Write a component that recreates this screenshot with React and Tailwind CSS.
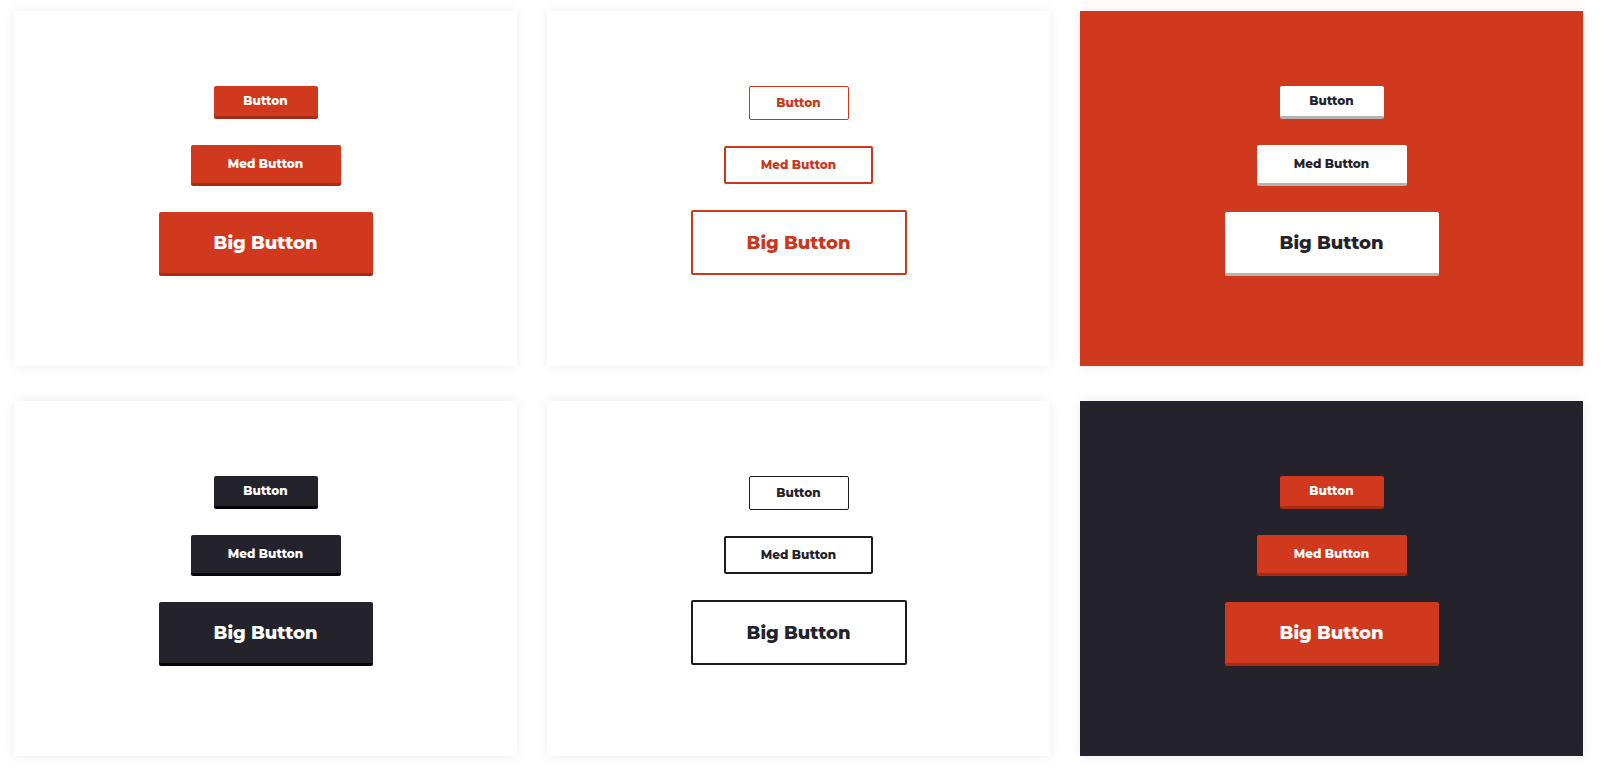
import React from 'react';

const font = { fontFamily: 'Montserrat, Inter, "Open Sans", sans-serif' };

// solid buttons have a darker 3px bottom edge
const solidSize = {
  sm: 'w-[104px] h-[33px] text-[12px]',
  md: 'w-[150px] h-[41px] text-[12px]',
  lg: 'w-[214px] h-[64px] text-[18px] pt-[2px]',
};

const outlineSize = {
  sm: 'w-[100px] h-[34px] text-[12px] border',
  md: 'w-[149px] h-[38px] text-[12px] border-2',
  lg: 'w-[216px] h-[65px] text-[18px] border-2 pt-[2px]',
};

const solidTheme = {
  red: 'bg-[#d0391d] text-white border-b-[#a72c16]',
  dark: 'bg-[#24232b] text-white border-b-[#050507]',
  white: 'bg-white text-[#24232b] border-b-[#b3b3b3]',
};

const outlineTheme = {
  red: 'border-[#c9381c] text-[#c9381c] bg-white',
  dark: 'border-[#1c1b22] text-[#24232b] bg-white',
};

const SolidButton = ({ size, theme, children }) => (
  <button
    className={`${solidSize[size]} ${solidTheme[theme]} border-b-[3px] rounded-[2px] font-extrabold flex items-center justify-center`}
  >
    {children}
  </button>
);

const OutlineButton = ({ size, theme, children }) => (
  <button
    className={`${outlineSize[size]} ${outlineTheme[theme]} rounded-[2px] font-extrabold flex items-center justify-center`}
  >
    {children}
  </button>
);

const Panel = ({ bg, children }) => (
  <div className={`${bg} h-[355px] flex flex-col items-center pt-[75px] gap-[26px] shadow-[0_0_12px_rgba(0,0,0,0.08)]`}>
    {children}
  </div>
);

const SolidSet = ({ theme }) => (
  <>
    <SolidButton size="sm" theme={theme}>Button</SolidButton>
    <SolidButton size="md" theme={theme}>Med Button</SolidButton>
    <SolidButton size="lg" theme={theme}>Big Button</SolidButton>
  </>
);

const OutlineSet = ({ theme }) => (
  <>
    <OutlineButton size="sm" theme={theme}>Button</OutlineButton>
    <OutlineButton size="md" theme={theme}>Med Button</OutlineButton>
    <OutlineButton size="lg" theme={theme}>Big Button</OutlineButton>
  </>
);

const App = () => {
  return (
    <div className="min-h-[776px] bg-white pl-[14px] pt-[11px]" style={font}>
      <div className="grid grid-cols-[repeat(3,503px)] gap-x-[30px] gap-y-[35px]">
        <Panel bg="bg-white">
          <SolidSet theme="red" />
        </Panel>
        <Panel bg="bg-white">
          <OutlineSet theme="red" />
        </Panel>
        <Panel bg="bg-[#d0391d]">
          <SolidSet theme="white" />
        </Panel>

        <Panel bg="bg-white">
          <SolidSet theme="dark" />
        </Panel>
        <Panel bg="bg-white">
          <OutlineSet theme="dark" />
        </Panel>
        <Panel bg="bg-[#24232b]">
          <SolidSet theme="red" />
        </Panel>
      </div>
    </div>
  );
};

export default App;
